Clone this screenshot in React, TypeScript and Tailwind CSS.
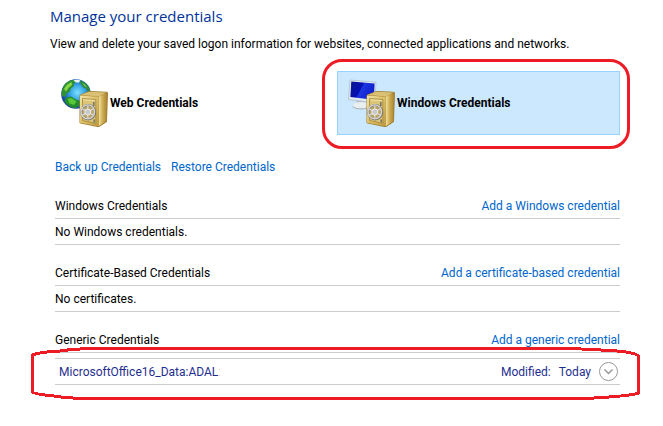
import React from 'react';

const Safe = ({ id }: { id: string }) => (
  <g>
    <defs>
      <linearGradient id={`${id}-front`} x1="0" y1="0" x2="1" y2="1">
        <stop offset="0" stopColor="#f0e2a6" />
        <stop offset="0.5" stopColor="#dcc06a" />
        <stop offset="1" stopColor="#c09c40" />
      </linearGradient>
      <linearGradient id={`${id}-side`} x1="0" y1="0" x2="1" y2="0">
        <stop offset="0" stopColor="#f3e3a2" />
        <stop offset="0.45" stopColor="#cfae55" />
        <stop offset="1" stopColor="#a5812d" />
      </linearGradient>
    </defs>
    <path d="M19.5 18 Q19.5 17 20.5 16.5 L28 13.4 Q29 13 30 13 L46.5 13.8 Q48 14 48 15.5 L47 43 Q47 44 46 44.6 L39.5 48.8 Q38.5 49.3 37.5 49 L20.5 45.6 Q19.5 45.3 19.5 44.5 Z" fill="#a07e30" />
    <path d="M20.5 17 L29 13.8 L46.5 14.4 L39 18.5 Z" fill="#d9c072" />
    <path d="M38.7 18.7 L47.3 14.8 L46.4 43 L38.7 48.3 Z" fill={`url(#${id}-side)`} />
    <path d="M20 17.5 L38.5 18.7 L38.5 48.3 L20 44.8 Z" fill={`url(#${id}-front)`} />
    <path d="M22.5 20.5 L35.8 21.5 L35.8 45.5 L22.5 42.5 Z" fill="#dcc577" stroke="#a58539" strokeWidth="0.8" />
    <path d="M23.5 21.8 L34.8 22.6" stroke="#f6ebb8" strokeWidth="0.8" />
    <path d="M33.8 24.5 v3 M34.2 42 v2" stroke="#77776c" strokeWidth="1.6" strokeLinecap="round" />
    <ellipse cx="28.2" cy="34.2" rx="7" ry="7.2" fill="#b9a467" stroke="#76736d" strokeWidth="2" />
    <ellipse cx="27.8" cy="33.8" rx="6.8" ry="7" fill="none" stroke="#d6d6d6" strokeWidth="1.3" />
    <path d="M27.8 27.5 v13 M22.2 30.7 l11.2 6.6 M22.2 37.3 l11.2 -6.6" stroke="#dcdcdc" strokeWidth="1.1" />
    <circle cx="27.8" cy="34" r="3" fill="#c6c8ca" stroke="#f0f0f0" strokeWidth="0.9" />
  </g>
);

const WebIcon = () => (
  <svg className="h-[50px] w-[50px] shrink-0" viewBox="0 0 50 50" aria-hidden="true">
    <defs>
      <radialGradient id="globe" cx="0.55" cy="0.45" r="0.6">
        <stop offset="0" stopColor="#7fe0fb" />
        <stop offset="0.4" stopColor="#3aa9e8" />
        <stop offset="0.8" stopColor="#174fb0" />
        <stop offset="1" stopColor="#24408a" />
      </radialGradient>
    </defs>
    <circle cx="16" cy="16" r="14.8" fill="url(#globe)" />
    <path d="M1.6 15 Q2.5 6 10 2.6 L14.5 1.8 L16 4 L13.5 6 L14 8 L11 10.5 L9.5 14 L6.5 15.5 L5 19 L2 18 Z" fill="#2f9132" />
    <path d="M4 11 Q6.5 6 11.5 4 L12 7 L8.5 10 L6 13.5 Z" fill="#86d646" />
    <path d="M19 2 Q26 4 29 9 L30.5 14 L28 14 L26 10.5 L23 9.5 L20.5 5.5 Z" fill="#2f8a3d" />
    <path d="M22 5 L25 6.5 L27 9.5 L24.5 8.5 Z" fill="#6fc258" />
    <path d="M6 19.5 L11 18.5 L16 21.5 L20 23 L19.5 28 L14.5 30.3 Q8 28.5 4.5 23.5 Z" fill="#238c2c" />
    <path d="M7.5 20.8 L11.5 20 L16.5 23.5 L14 27 L9.5 25.5 Z" fill="#58c639" />
    <path d="M13.5 2.3 Q17 1.4 20.5 2.4 L18.5 4.8 L15.5 4.2 Z" fill="#e8f6fb" />
    <Safe id="web" />
  </svg>
);

const WindowsIcon = () => (
  <svg className="h-[50px] w-[50px] shrink-0" viewBox="0 0 50 50" aria-hidden="true">
    <defs>
      <linearGradient id="screen" x1="0" y1="0" x2="1" y2="0.4">
        <stop offset="0" stopColor="#0a1590" />
        <stop offset="0.5" stopColor="#0510b4" />
        <stop offset="0.54" stopColor="#1c36e0" />
        <stop offset="1" stopColor="#0f1fd0" />
      </linearGradient>
    </defs>
    <path d="M10 20 L17 21 L18 27 L9 26 Z" fill="#b9c2c8" />
    <ellipse cx="14" cy="28" rx="8.5" ry="3.6" fill="#a9b3ba" />
    <ellipse cx="14" cy="27.2" rx="8.2" ry="3.1" fill="#e9eef1" />
    <path d="M3 2 L29 4.2 L28 25 L1.5 21.5 Z" fill="#e2eaef" stroke="#a3b1bd" strokeWidth="0.6" />
    <path d="M4.3 3.4 L27.6 5.4 L26.8 21.8 L3.4 19 Z" fill="url(#screen)" />
    <Safe id="win" />
  </svg>
);

const sections = [
  { title: 'Windows Credentials', link: 'Add a Windows credential', empty: 'No Windows credentials.' },
  { title: 'Certificate-Based Credentials', link: 'Add a certificate-based credential', empty: 'No certificates.' },
];

const SectionHeader = ({ title, link }: { title: string; link: string }) => (
  <div className="flex h-[25px] items-center justify-between border-b border-[#cccccc]">
    <h2>{title}</h2>
    <a href="#" className="text-[#0066cc]">{link}</a>
  </div>
);

const App = () => {
  return (
    <main className="min-h-screen bg-white pt-1 pr-[43px] pb-10 pl-[50px] font-[Roboto,sans-serif] text-[12px] leading-5 text-black">
      <h1 className="font-['Open_Sans',sans-serif] text-[15px] leading-6 text-[#003399]">Manage your credentials</h1>
      <p className="mt-[6px] whitespace-nowrap">
        View and delete your saved logon information for websites, connected applications and networks.
      </p>

      <div className="mt-[17px] grid grid-cols-2 gap-1">
        <button type="button" className="flex h-16 items-center px-[10px] text-left font-bold">
          <WebIcon />
          Web Credentials
        </button>
        <button
          type="button"
          className="relative flex h-16 items-center border border-[#99d1ff] bg-[#cce8ff] px-[9px] text-left font-bold"
        >
          <WindowsIcon />
          Windows Credentials
          <span className="pointer-events-none absolute -top-[13px] -right-[11px] -bottom-[15px] -left-4 rounded-[20px] border-3 border-[#ed1c24]" />
        </button>
      </div>

      <div className="pl-[5px]">
        <nav className="mt-[22px] flex gap-[10px] text-[#0066cc]">
          <a href="#">Back up Credentials</a>
          <a href="#">Restore Credentials</a>
        </nav>

        <div className="mt-[17px] flex flex-col gap-4">
          {sections.map((section) => (
            <section key={section.title}>
              <SectionHeader title={section.title} link={section.link} />
              <p className="flex h-[26px] items-center border-b border-[#cccccc]">{section.empty}</p>
            </section>
          ))}

          <section>
            <SectionHeader title="Generic Credentials" link="Add a generic credential" />
            <div className="relative mt-[5px] flex h-[27px] items-center border-y border-[#cccccc] pr-[2px] pl-1 text-[#1f2f8f]">
              <span className="flex-1">
                MicrosoftOffice16_Data:ADAL<span className="text-[#ffd8c4]">:</span>
              </span>
              <span>Modified:</span>
              <span className="ml-2">Today</span>
              <button type="button" aria-label="Show details" className="ml-2">
                <svg className="h-[19px] w-[19px]" viewBox="0 0 19 19" fill="none" stroke="#999999">
                  <circle cx="9.5" cy="9.5" r="9" />
                  <path d="M5.5 7.5 L9.5 11.5 L13.5 7.5" strokeWidth="1.5" />
                </svg>
              </button>
              {/* Hand-drawn marker loop */}
              <svg
                className="pointer-events-none absolute -top-[13px] -left-6 h-[55px] w-[calc(100%+44px)]"
                viewBox="0 0 609 55"
                preserveAspectRatio="none"
                fill="none"
                stroke="#ed1c24"
                strokeWidth="3"
                shapeRendering="crispEdges"
              >
                <path d="M1.5 9 Q8 6 29 5 Q45 2.5 67 2.5 H539 Q575 4 592 5.5 Q607 8 607.5 10 V47 Q601 50 555 52.5 H53 Q35 52 23 50 Q3 48 1.5 46 Z" />
              </svg>
            </div>
          </section>
        </div>
      </div>
    </main>
  );
};

export default App;
